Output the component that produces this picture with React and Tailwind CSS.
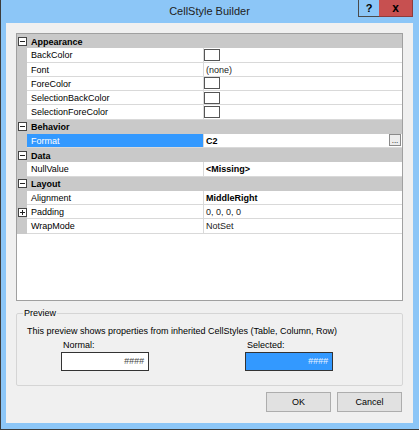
import React from "react";

const sections = [
  {
    name: "Appearance",
    rows: [
      { label: "BackColor", swatch: true },
      { label: "Font", value: "(none)" },
      { label: "ForeColor", swatch: true },
      { label: "SelectionBackColor", swatch: true },
      { label: "SelectionForeColor", swatch: true },
    ],
  },
  {
    name: "Behavior",
    rows: [{ label: "Format", value: "C2", bold: true, selected: true, ellipsis: true }],
  },
  {
    name: "Data",
    rows: [{ label: "NullValue", value: "<Missing>", bold: true }],
  },
  {
    name: "Layout",
    rows: [
      { label: "Alignment", value: "MiddleRight", bold: true },
      { label: "Padding", value: "0, 0, 0, 0", plus: true },
      { label: "WrapMode", value: "NotSet" },
    ],
  },
];

function ExpandBox({ plus }) {
  return (
    <div className="w-[9px] h-[9px] border border-[#444] bg-white flex items-center justify-center relative">
      <div className="w-[5px] h-[1px] bg-[#222]" />
      {plus && <div className="absolute w-[1px] h-[5px] bg-[#222]" />}
    </div>
  );
}

function CategoryRow({ name }) {
  return (
    <div className="flex h-[14.25px] bg-[#c9c9c9] items-center">
      <div className="w-[10px] flex justify-center">
        <ExpandBox />
      </div>
      <div className="pl-[4px] pt-[2px] font-bold text-black">{name}</div>
    </div>
  );
}

function PropRow({ row }) {
  return (
    <div className="flex h-[14.25px]">
      <div className="w-[10px] bg-[#c9c9c9] flex items-center justify-center">
        {row.plus && <ExpandBox plus />}
      </div>
      <div
        className={
          row.selected
            ? "w-[177px] bg-[#3399ff] text-white border-b border-r border-[#d9d9d9] pl-[4px] pt-[2px] flex items-center"
            : "w-[177px] bg-white text-black border-b border-r border-[#d9d9d9] pl-[4px] pt-[2px] flex items-center"
        }
      >
        {row.label}
      </div>
      <div className="flex-1 bg-white border-b border-[#d9d9d9] flex items-center">
        {row.swatch ? (
          <div className="w-[16px] h-[12px] border border-[#555] bg-white" />
        ) : (
          <div className={row.bold ? "pl-[2px] pt-[2px] font-bold text-black flex-1" : "pl-[2px] pt-[2px] text-[#222] flex-1"}>
            {row.value}
          </div>
        )}
        {row.ellipsis && (
          <div className="w-[12px] h-[12px] mr-[1px] border border-[#8a8a8a] bg-[#ececec] flex items-end justify-center text-[8px] leading-[8px] text-black">
            ...
          </div>
        )}
      </div>
    </div>
  );
}

export default function App() {
  return (
    <div className="w-[419px] h-[430px] bg-[#8cc6f7] border-l border-b border-[#3c3c3c] pl-[5px] pr-[6px] pb-[6px] flex flex-col font-['Liberation_Sans',sans-serif] text-[9px] leading-none">
      {/* title bar */}
      <div className="h-[23px] grid grid-cols-[1fr_auto_1fr] items-start">
        <div />
        <div className="h-[23px] flex items-center text-[11px] text-[#222]">CellStyle Builder</div>
        <div className="flex justify-end">
          <div className="w-[21px] h-[17px] border-l border-b border-[#4a4a4a] bg-[#8cc6f7] flex items-center justify-center text-[11px] font-bold text-black">
            ?
          </div>
          <div className="w-[34px] h-[17px] border-b border-r border-[#8e3b3b] bg-[#c75050] flex items-center justify-center text-[12px] font-bold text-black">
            x
          </div>
        </div>
      </div>

      {/* client area */}
      <div className="flex-1 bg-[#f0f0f0] px-[10px] pt-[10px] flex flex-col">
        <div className="h-[268px] border border-[#a0a0a0] bg-white flex flex-col">
          {sections.map((s) => (
            <div key={s.name}>
              <CategoryRow name={s.name} />
              {s.rows.map((r) => (
                <PropRow key={r.label} row={r} />
              ))}
            </div>
          ))}
        </div>

        <fieldset className="mt-[6px] h-[79px] border border-[#d5d5d5] rounded-[2px] pl-[6px] pr-[6px]">
          <legend className="px-[1px] h-[13px] leading-[13px] text-black">Preview</legend>
          <div className="pl-[4px] pt-[7px] text-black">
            This preview shows properties from inherited CellStyles (Table, Column, Row)
          </div>
          <div className="flex pl-[38px] pt-[5px] gap-[96px]">
            <div className="flex flex-col">
              <div className="pl-[2px] h-[11px] text-black">Normal:</div>
              <div className="w-[88px] h-[19px] border border-[#333] bg-white flex items-center justify-end pr-[4px] italic text-[#444]">
                ####
              </div>
            </div>
            <div className="flex flex-col">
              <div className="pl-[2px] h-[11px] text-black">Selected:</div>
              <div className="w-[88px] h-[19px] border border-[#333] bg-[#3399ff] flex items-center justify-end pr-[4px] italic text-[#e8f2ff]">
                ####
              </div>
            </div>
          </div>
        </fieldset>

        <div className="mt-[6px] flex justify-end gap-[6px] pr-[1px]">
          <button className="w-[65px] h-[20px] bg-[#e1e1e1] border border-[#adadad] text-black text-[9px]">OK</button>
          <button className="w-[65px] h-[20px] bg-[#e1e1e1] border border-[#adadad] text-black text-[9px]">Cancel</button>
        </div>
      </div>
    </div>
  );
}
